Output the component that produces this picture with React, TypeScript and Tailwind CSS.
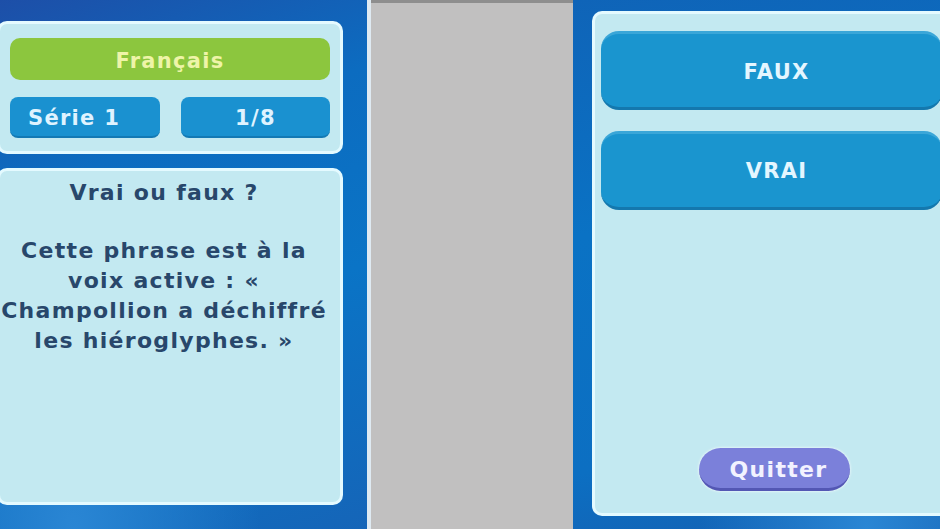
import React from "react";

const font = { fontFamily: '"DejaVu Sans", "Liberation Sans", sans-serif' };

export default function App() {
  return (
    <div
      className="flex h-[529px] w-[940px] overflow-hidden font-bold tracking-[1.3px]"
      style={font}
    >
      {/* Left screen */}
      <div className="flex w-[367px] shrink-0 flex-col gap-[14px] bg-[radial-gradient(ellipse_at_20%_100%,#2a86d4_0%,transparent_45%),linear-gradient(160deg,#1d4fa8_0%,#0c6cc0_30%,#0a74c6_60%,#1565b8_100%)] pb-[24px] pr-[24px] pt-[21px]">
        <div className="-ml-[3px] flex flex-col gap-[17px] rounded-[10px] border-[3px] border-[#e4faff] bg-[#c3e9f1] pb-[13px] pl-[10px] pr-[10px] pt-[14px]">
          <div className="flex h-[42px] items-center justify-center rounded-[10px] bg-[#8cc63e] pt-[5px] text-[21px] text-[#eef4a8]">
            Français
          </div>
          <div className="flex gap-[21px]">
            <div className="flex h-[41px] w-[150px] items-center rounded-[8px] border-b-2 border-[#1379b4] bg-[#1a91d0] pl-[18px] pt-[4px] text-[21px] text-[#dff3ff]">
              Série 1
            </div>
            <div className="flex h-[41px] flex-1 items-center justify-center rounded-[8px] border-b-2 border-[#1379b4] bg-[#1a91d0] pt-[4px] text-[21px] text-[#dff3ff]">
              1/8
            </div>
          </div>
        </div>
        <div className="-ml-[3px] flex flex-1 flex-col items-center rounded-[10px] border-[3px] border-[#e4faff] bg-[#c3e9f1] pr-[12px] pt-[7px] text-center text-[22px] leading-[30px] text-[#28476b]">
          <div>Vrai ou faux ?</div>
          <div className="h-[28px]" />
          <div className="whitespace-nowrap">Cette phrase est à la</div>
          <div className="whitespace-nowrap">voix active : «</div>
          <div className="whitespace-nowrap">Champollion a déchiffré</div>
          <div className="whitespace-nowrap">les hiéroglyphes. »</div>
        </div>
      </div>

      {/* Middle gray */}
      <div className="flex w-[206px] shrink-0 flex-col border-l-[4px] border-[#dfeaf2] bg-[#c1c0c0]">
        <div className="h-[3px] bg-[#8e8e8e]" />
      </div>

      {/* Right screen */}
      <div className="flex flex-1 flex-col bg-[radial-gradient(ellipse_at_80%_100%,#2a86d4_0%,transparent_40%),linear-gradient(170deg,#0f64b8_0%,#0a72c4_40%,#0c6fc2_80%,#1560b2_100%)] pb-[13px] pl-[19px] pt-[11px]">
        <div className="-mr-[12px] flex flex-1 flex-col rounded-l-[10px] border-[3px] border-r-0 border-[#e4faff] bg-[#c3e9f1] pl-[6px] pr-[10px] pt-[17px]">
          <div className="flex h-[79px] items-center justify-center rounded-[18px] border-t-[3px] border-b-[3px] border-t-[#3aa6d8] border-b-[#1478ae] bg-[#1a95cf] pl-[10px] pt-[5px] text-[21px] text-[#e4f6ff]">
            FAUX
          </div>
          <div className="mt-[21px] flex h-[79px] items-center justify-center rounded-[18px] border-t-[3px] border-b-[3px] border-t-[#3aa6d8] border-b-[#1478ae] bg-[#1a95cf] pl-[10px] pt-[3px] text-[21px] text-[#e4f6ff]">
            VRAI
          </div>
          <div className="flex flex-1 items-end justify-center pb-[22px] pl-[6px]">
            <div className="flex h-[43px] w-[151px] items-center justify-center rounded-full border-b-[3px] border-[#5357b4] bg-[#7b80da] pl-[8px] pt-[2px] text-[22px] text-[#f2f2ff] shadow-[0_0_3px_#ffffff]">
              Quitter
            </div>
          </div>
        </div>
      </div>
    </div>
  );
}
